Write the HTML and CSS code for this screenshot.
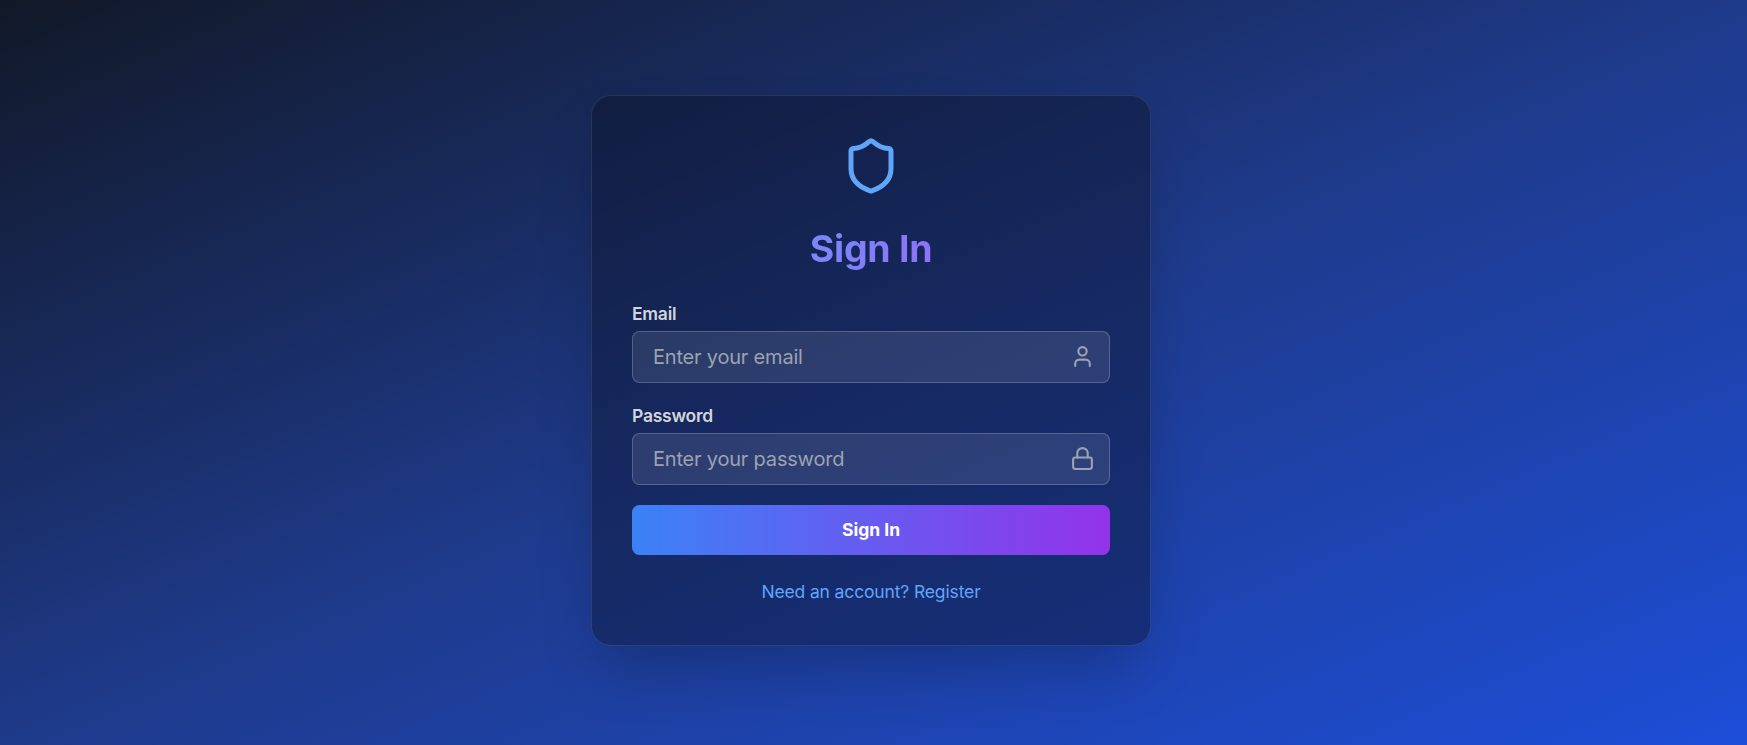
FILE: index.html
```html
<!DOCTYPE html>
<html lang="en">
<head>
<meta charset="utf-8">
<title>Sign In</title>
<link rel="stylesheet" href="styles.css">
</head>
<body>
<main class="page">
  <section class="card">
    <header class="head">
      <svg class="shield" viewBox="0 0 24 24"><path d="M20 13c0 5-3.5 7.5-7.66 8.95a1 1 0 0 1-.67-.01C7.5 20.5 4 18 4 13V6a1 1 0 0 1 1-1c2 0 4.5-1.2 6.24-2.72a1.17 1.17 0 0 1 1.52 0C14.51 3.81 17 5 19 5a1 1 0 0 1 1 1z"/></svg>
      <h1 class="title">Sign In</h1>
    </header>
    <form class="form">
      <div class="field">
        <label class="label" for="email">Email</label>
        <div class="control">
          <input class="input" id="email" type="email" placeholder="Enter your email">
          <svg class="icon" viewBox="0 0 24 24"><path d="M19 21v-2a4 4 0 0 0-4-4H9a4 4 0 0 0-4 4v2"/><circle cx="12" cy="7" r="4"/></svg>
        </div>
      </div>
      <div class="field">
        <label class="label" for="password">Password</label>
        <div class="control">
          <input class="input" id="password" type="password" placeholder="Enter your password">
          <svg class="icon" viewBox="0 0 24 24"><rect width="18" height="11" x="3" y="11" rx="2"/><path d="M7 11V7a5 5 0 0 1 10 0v4"/></svg>
        </div>
      </div>
      <button class="submit" type="button">Sign In</button>
    </form>
    <div class="foot"><a class="link">Need an account? Register</a></div>
  </section>
</main>
</body>
</html>
```
FILE: styles.css
```css
* { box-sizing: border-box; }
body { margin: 0; font-family: Inter, "Liberation Sans", sans-serif; }
.page {
  height: 745px;
  padding-right: 5px;
  padding-bottom: 4px;
  display: flex;
  align-items: center;
  justify-content: center;
  background: linear-gradient(to bottom right, #111827, #1e3a8a, #1d4ed8);
}
.card {
  width: 560px;
  height: 551px;
  padding: 40px;
  border: 1px solid rgba(255, 255, 255, 0.1);
  border-radius: 20px;
  background: color-mix(in srgb, #0a0f24 40%, transparent);
  box-shadow: 0 31px 62px -15px rgba(0, 0, 0, 0.25);
}
.head { display: flex; flex-direction: column; align-items: center; }
.shield { width: 60px; height: 60px; margin-bottom: 30px; fill: none; stroke: #60a5fa; stroke-width: 2; stroke-linecap: round; stroke-linejoin: round; }
.title {
  width: 100%;
  margin: 0 0 30px;
  font-size: 37.5px;
  line-height: 45px;
  font-weight: 700;
  letter-spacing: -0.3px;
  text-align: center;
  color: transparent;
  background: linear-gradient(to right, #60a5fa, #a855f7);
  -webkit-background-clip: text;
  background-clip: text;
}
.form { display: flex; flex-direction: column; gap: 20px; }
.label { display: block; margin-bottom: 5px; font-size: 17.5px; line-height: 25px; font-weight: 600; letter-spacing: -0.25px; color: #d1d5db; }
.control { position: relative; height: 52px; }
.input {
  display: block;
  width: 100%;
  height: 52px;
  padding: 0 50px 0 20px;
  border: 1px solid rgba(255, 255, 255, 0.2);
  border-radius: 7.5px;
  background: rgba(255, 255, 255, 0.1);
  font: 400 20px/30px Inter, sans-serif;
  letter-spacing: -0.2px;
  color: #fff;
}
.input::placeholder { color: #9ca3af; opacity: 1; }
.icon { position: absolute; right: 15px; top: 13px; width: 25px; height: 25px; fill: none; stroke: #9ca3af; stroke-width: 2; stroke-linecap: round; stroke-linejoin: round; }
.submit {
  height: 50px;
  padding: 0 0 2px;
  border: 0;
  border-radius: 7.5px;
  background: linear-gradient(to right, #3b82f6, #9333ea);
  color: #fff;
  font: 700 17.5px/25px Inter, sans-serif;
}
.foot { margin-top: 24px; text-align: center; }
.link { font-size: 17.5px; line-height: 25px; letter-spacing: -0.14px; color: #60a5fa; }
```
